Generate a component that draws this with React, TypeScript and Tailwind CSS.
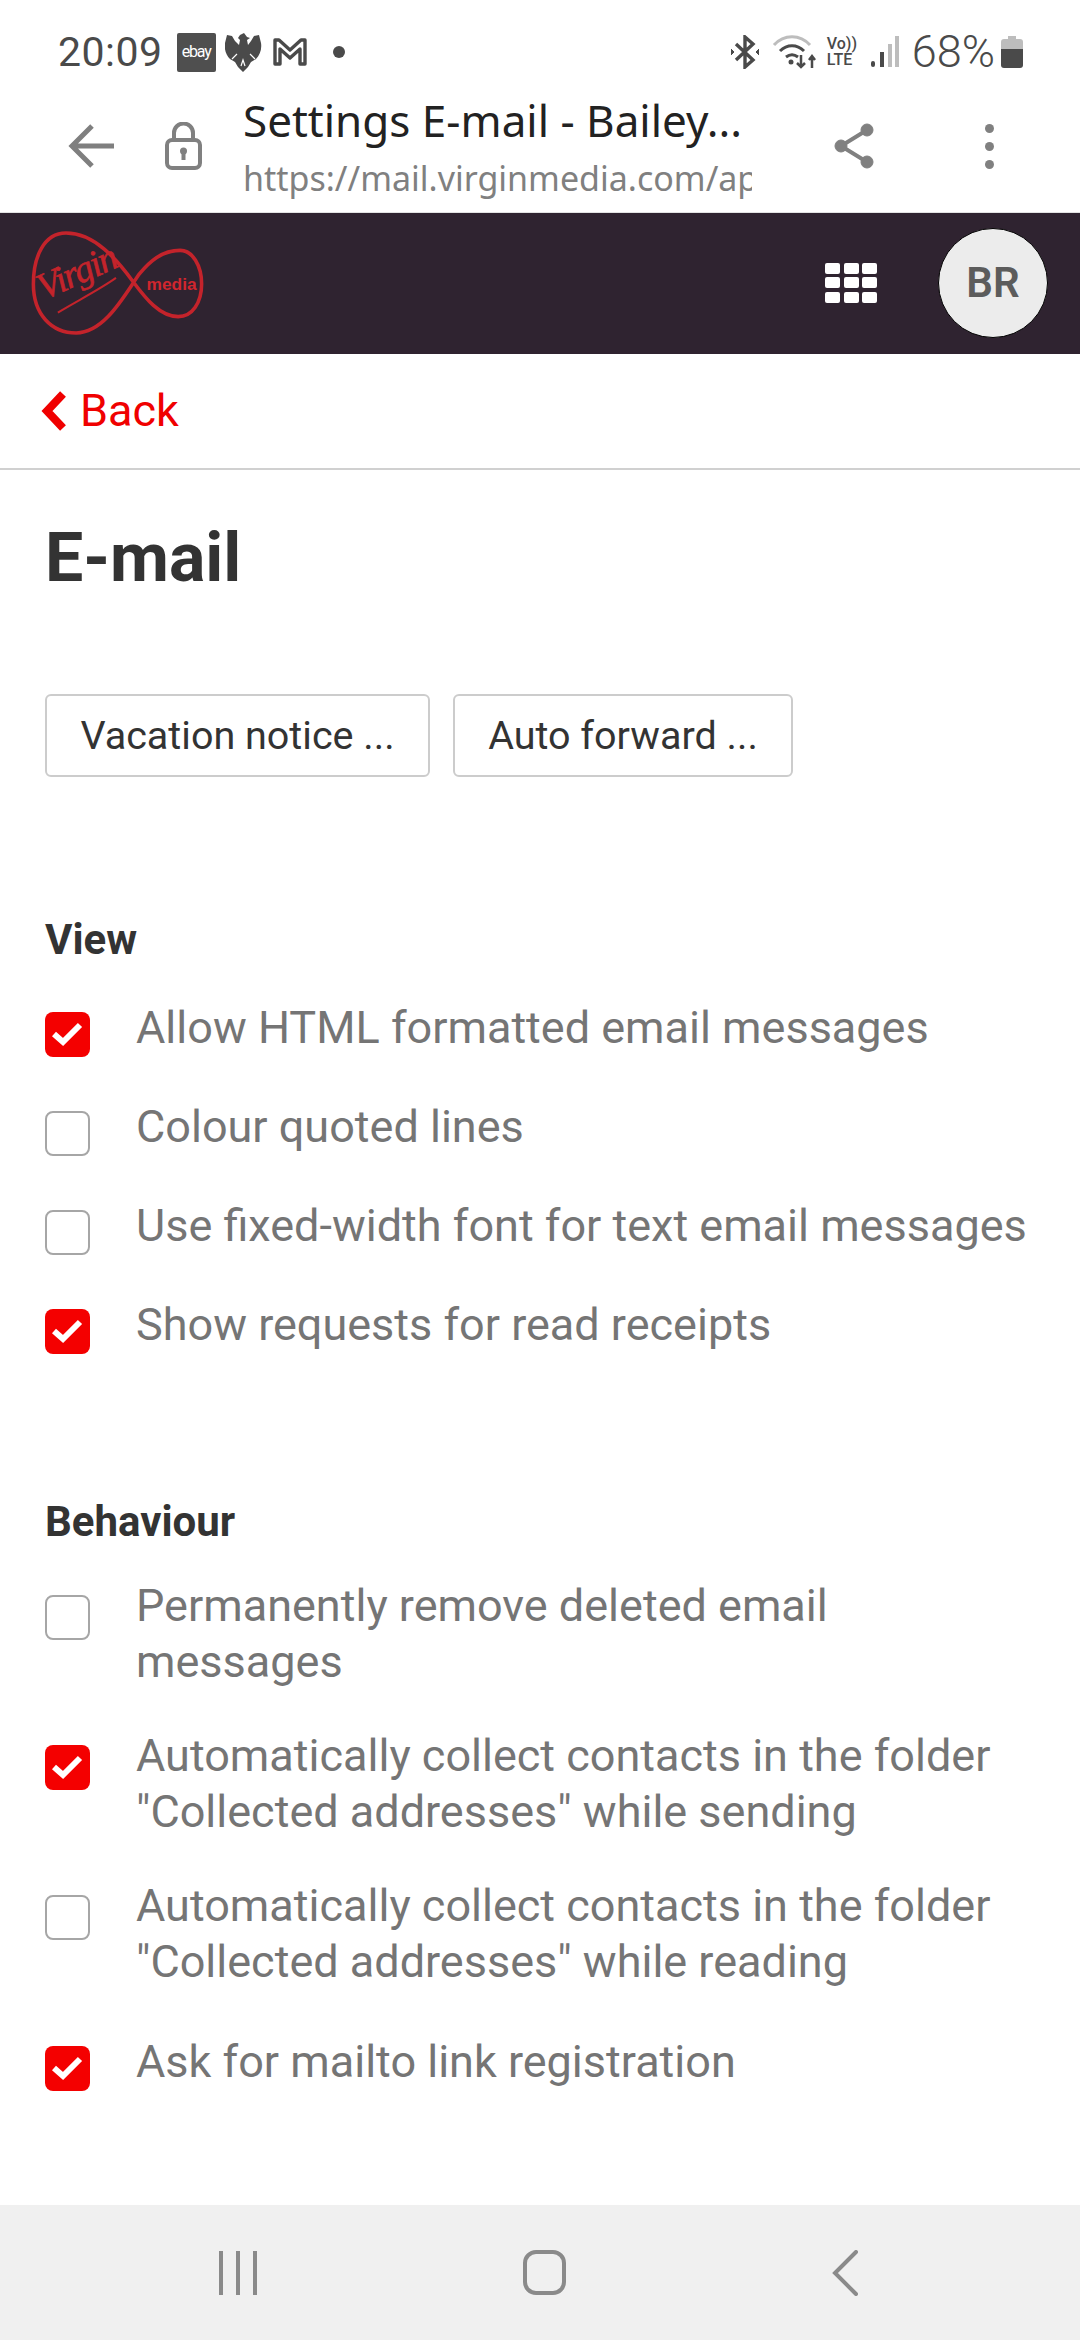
const viewOptions = [
    { label: "Allow HTML formatted email messages", checked: true },
    { label: "Colour quoted lines", checked: false },
    { label: "Use fixed-width font for text email messages", checked: false },
    { label: "Show requests for read receipts", checked: true },
]

const behaviourOptions = [
    { label: "Permanently remove deleted email messages", checked: false, wrapped: true },
    { label: 'Automatically collect contacts in the folder "Collected addresses" while sending', checked: true, wrapped: true },
    { label: 'Automatically collect contacts in the folder "Collected addresses" while reading', checked: false, wrapped: true },
    { label: "Ask for mailto link registration", checked: true, wrapped: false },
]

function CheckBox({ checked }: { checked: boolean }) {
    if (!checked) {
        return <div className="h-[45px] w-[45px] rounded-[8px] border-[2px] border-[#a6a6a6] bg-white" />
    }
    return (
        <div className="h-[45px] w-[45px] rounded-[8px] bg-[#f40000]">
            <svg width="45" height="45" viewBox="0 0 45 45" fill="none">
                <path d="M9 22l9 8L35 13" stroke="#fff" strokeWidth="6" />
            </svg>
        </div>
    )
}

function OptionRow({ label, checked, wrapped }: { label: string; checked: boolean; wrapped?: boolean }) {
    return (
        <div className="flex gap-[46px]">
            <div className={wrapped ? "mt-[17px] shrink-0" : "mt-[12px] shrink-0"}>
                <CheckBox checked={checked} />
            </div>
            <div className="w-[900px] text-[45px] leading-[56px] text-[#757575]">{label}</div>
        </div>
    )
}

function StatusBar() {
    return (
        <div className="flex h-[72px] items-center justify-between pl-[58px] pr-[57px] pt-[32px] font-['Roboto',sans-serif] text-[#4a4a4a]">
            <div className="flex items-center">
                <span className="text-[41px] leading-[40px] tracking-[0.5px]">20:09</span>
                <div className="ml-[14px] flex h-[39px] w-[39px] items-center justify-center rounded-[2px] bg-[#4f4f4f] text-[16px] tracking-[-1.2px] text-white">ebay</div>
                <svg className="ml-[9px]" width="37" height="39" viewBox="0 0 37 39" fill="#4a4a4a">
                    <path d="M19 0l3 4 3 1-3 2 1 5 3-4 3-5 5-1 2 8c1 6-1 12-5 16l-5 3-3 5-5 5-5-5-3-5-5-3C1 22-1 16 0 10l2-8 5 1 3 5 4 4 1-5-2-2 2-3z" />
                    <path d="M7 26l5-5M30 26l-5-5M16 33l2-6 2 6" stroke="#ffffff" strokeWidth="1.2" fill="none" />
                </svg>
                <svg className="ml-[11px]" width="34" height="28" viewBox="0 0 34 28" fill="none" stroke="#4a4a4a" strokeWidth="3.4">
                    <path d="M2 26V2h4l11 10L28 2h4v24h-5V11l-10 9-10-9v15z" strokeLinejoin="round" />
                </svg>
                <div className="ml-[26px] h-[12px] w-[12px] rounded-full bg-[#4a4a4a]" />
            </div>
            <div className="flex items-center">
                <svg width="28" height="34" viewBox="0 0 28 34" fill="none" stroke="#4a4a4a" strokeWidth="3.4">
                    <path d="M5 9l17 16-8 7V2l8 7L5 25" />
                    <path d="M0 14l3 3-3 3zM28 14l-3 3 3 3z" fill="#4a4a4a" strokeWidth="1" />
                </svg>
                <svg className="ml-[13px]" width="44" height="34" viewBox="0 0 44 34" fill="none">
                    <path d="M2 10c10-11 26-11 36 0" stroke="#bdbdbd" strokeWidth="3" />
                    <path d="M8 16c7-7 17-7 24 0" stroke="#4a4a4a" strokeWidth="3" />
                    <path d="M14 22c4-3 8-3 12 0" stroke="#4a4a4a" strokeWidth="3" />
                    <circle cx="19" cy="27" r="2.5" fill="#4a4a4a" />
                    <path d="M29 20v12m-4-4l4 4 4-4M40 33V21m-3 4l3-4 3 4" stroke="#4a4a4a" strokeWidth="2.5" />
                </svg>
                <div className="ml-[11px] flex w-[32px] flex-col text-[16px] font-medium leading-[16px]">
                    <span>Vo))</span>
                    <span>LTE</span>
                </div>
                <svg className="ml-[12px]" width="28" height="32" viewBox="0 0 28 32">
                    <rect x="0" y="25" width="4" height="6" rx="2" fill="#4a4a4a" />
                    <rect x="9" y="16" width="4" height="15" fill="#4a4a4a" />
                    <rect x="17" y="8" width="4" height="23" fill="#bdbdbd" />
                    <rect x="24" y="0" width="4" height="31" fill="#bdbdbd" />
                </svg>
                <span className="ml-[13px] text-[45px] font-light leading-[40px]">68%</span>
                <svg className="ml-[6px]" width="22" height="32" viewBox="0 0 22 32">
                    <path d="M7 0h8v3h4a3 3 0 013 3v7H0V6a3 3 0 013-3h4z" fill="#bdbdbd" />
                    <path d="M0 13h22v16a3 3 0 01-3 3H3a3 3 0 01-3-3z" fill="#4a4a4a" />
                </svg>
            </div>
        </div>
    )
}

function BrowserBar() {
    return (
        <div className="flex h-[141px] items-center border-b border-[#e2e2e2] bg-white pt-[8px] font-['Noto_Sans',sans-serif]">
            <svg className="ml-[68px]" width="46" height="46" viewBox="0 0 46 46" fill="none" stroke="#7f7f7f" strokeWidth="5">
                <path d="M46 23H4M24 3L4 23l20 20" />
            </svg>
            <svg className="ml-[51px]" width="37" height="48" viewBox="0 0 37 48" fill="none">
                <path d="M9 19v-8a9.500 9.500 0 0119 0v8" stroke="#808080" strokeWidth="4" />
                <rect x="2" y="18" width="33" height="28" rx="5" stroke="#808080" strokeWidth="4" />
                <circle cx="18.500" cy="29" r="3.500" fill="#808080" />
                <rect x="16.500" y="30" width="4" height="8" fill="#808080" />
            </svg>
            <div className="ml-[41px] w-[509px]">
                <div className="whitespace-nowrap text-[44px] leading-[56px] text-[#222222]">Settings E-mail - Bailey...</div>
                {/* url runs past the box and gets clipped like in the real browser bar */}
                <div className="mt-[8px] overflow-hidden whitespace-nowrap text-[34px] leading-[44px] text-[#808080]">https://mail.virginmedia.com/appsuite</div>
            </div>
            <svg className="ml-[82px]" width="40" height="46" viewBox="0 0 40 46" fill="#808080" stroke="#808080">
                <circle cx="33" cy="7" r="6" />
                <circle cx="7" cy="23" r="6" />
                <circle cx="33" cy="39" r="6" />
                <path d="M33 7L7 23l26 16" fill="none" strokeWidth="4" />
            </svg>
            <div className="ml-[111px] flex flex-col gap-[9px]">
                <div className="h-[9px] w-[9px] rounded-full bg-[#808080]" />
                <div className="h-[9px] w-[9px] rounded-full bg-[#808080]" />
                <div className="h-[9px] w-[9px] rounded-full bg-[#808080]" />
            </div>
        </div>
    )
}

function VirginLogo() {
    return (
        <svg width="173" height="104" viewBox="0 0 169 102" fill="none">
            <path
                d="M34 2C12 2 2 26 2 52c0 30 18 48 42 48 28 0 48-38 62-58 10-12 22-23 40-23 12 0 21 15 21 33s-9 32-23 32c-18 0-32-18-44-34C84 28 62 2 34 2z"
                stroke="#c4232b"
                strokeWidth="3.5"
            />
            <text x="12" y="68" transform="rotate(-24 12 68)" fontFamily="'Liberation Serif', serif" fontStyle="italic" fontSize="37" letterSpacing="-1.5" fill="#c4232b" stroke="#c4232b" strokeWidth="0.6">
                Virgin
            </text>
            <path d="M26 80C44 69 66 58 83 46" stroke="#c4232b" strokeWidth="2" />
            <text x="113" y="58" fontFamily="'Liberation Sans', sans-serif" fontWeight="700" fontSize="17" fill="#d0262e">
                media
            </text>
        </svg>
    )
}

function AppHeader() {
    return (
        <div className="flex h-[141px] items-center bg-[#2f2330] pb-[2px] pl-[31px] pr-[32px]">
            <VirginLogo />
            <div className="ml-auto grid grid-cols-3 gap-[3.5px]">
                {Array.from({ length: 9 }).map((_, i) => (
                    <div key={i} className="h-[11px] w-[15px] rounded-[2px] bg-white" />
                ))}
            </div>
            <div className="ml-[61px] flex h-[110px] w-[110px] items-center justify-center rounded-full border border-black bg-[#ececec] text-[42px] font-semibold text-[#5c5c5c]">
                BR
            </div>
        </div>
    )
}

export default function App() {
    return (
        <div className="flex h-[2340px] w-[1080px] flex-col overflow-hidden bg-white font-['Roboto',sans-serif]">
            <StatusBar />
            <BrowserBar />
            <AppHeader />

            {/* Back link */}
            <div className="flex h-[116px] items-center gap-[12px] border-b-[2px] border-[#d0d0d0] pl-[40px] text-[45px] text-[#f00000]">
                <svg width="28" height="42" viewBox="0 0 28 42" fill="none">
                    <path d="M23 4L7 21l16 17" stroke="#f00000" strokeWidth="8" />
                </svg>
                <span>Back</span>
            </div>

            <main className="flex flex-1 flex-col px-[45px]">
                <h1 className="mt-[48px] text-[68px] font-bold leading-[80px] text-[#333333]">E-mail</h1>

                <div className="mt-[96px] flex gap-[23px]">
                    <div className="flex h-[83px] w-[385px] items-center justify-center rounded-[6px] border-[2px] border-[#cccccc] text-[39.500px] text-[#333333]">Vacation notice ...</div>
                    <div className="flex h-[83px] w-[340px] items-center justify-center rounded-[6px] border-[2px] border-[#cccccc] text-[39.500px] text-[#333333]">Auto forward ...</div>
                </div>

                <h2 className="mt-[138px] text-[42px] font-bold leading-[50px] text-[#333333]">View</h2>
                <div className="mt-[35px] flex flex-col gap-[42px]">
                    {viewOptions.map((o) => (
                        <OptionRow key={o.label} {...o} />
                    ))}
                </div>

                <h2 className="mt-[143px] text-[42px] font-bold leading-[50px] text-[#333333]">Behaviour</h2>
                <div className="mt-[31px] flex flex-col gap-[38px]">
                    {behaviourOptions.map((o) => (
                        <div key={o.label} className={o.wrapped ? "" : "mt-[6px]"}>
                            <OptionRow {...o} />
                        </div>
                    ))}
                </div>
            </main>

            {/* Android nav bar */}
            <div className="flex h-[135px] items-center justify-between bg-[#f0f0f0] pl-[219px] pr-[222px]">
                <div className="flex gap-[13px]">
                    <div className="h-[44px] w-[4px] bg-[#8a8a8a]" />
                    <div className="h-[44px] w-[4px] bg-[#8a8a8a]" />
                    <div className="h-[44px] w-[4px] bg-[#8a8a8a]" />
                </div>
                <div className="h-[45px] w-[43px] rounded-[13px] border-[4px] border-[#8a8a8a]" />
                <svg width="26" height="46" viewBox="0 0 26 46" fill="none">
                    <path d="M24 2L3 23l21 21" stroke="#8a8a8a" strokeWidth="4" strokeLinecap="round" />
                </svg>
            </div>
        </div>
    )
}
